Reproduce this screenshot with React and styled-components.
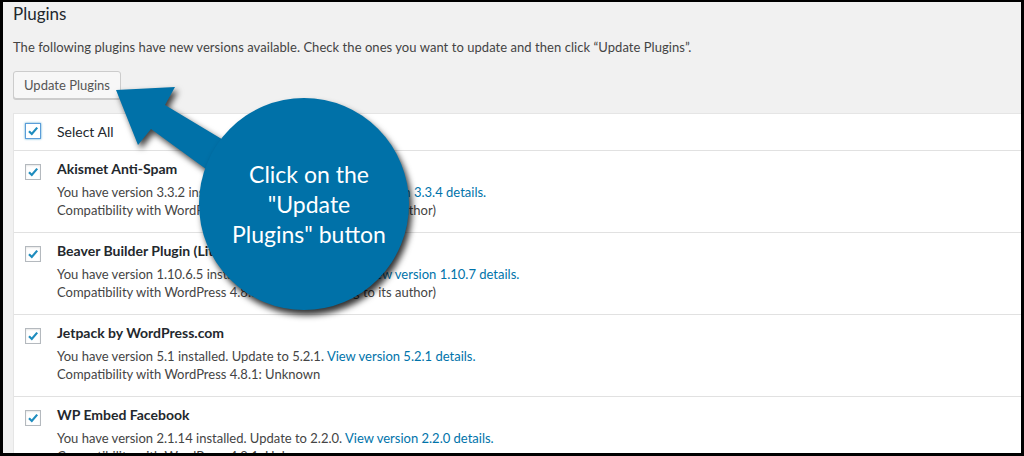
import React from 'react'
import styled, { createGlobalStyle } from 'styled-components'

const GlobalStyle = createGlobalStyle`
  body {
    margin: 0;
    background: #000;
  }
`

const FONT = `Lato, "Liberation Sans", sans-serif`

const Frame = styled.div`
  position: relative;
  box-sizing: border-box;
  width: 1024px;
  height: 456px;
  overflow: hidden;
  border: 3px solid #000;
  border-top-width: 2px;
  background: #f1f1f1;
  padding-left: 10px;
  font-family: ${FONT};
  color: #444;
`

const Heading = styled.h2`
  margin: 0;
  padding-top: 1px;
  font-size: 17px;
  line-height: 22px;
  font-weight: 400;
  color: #23282d;
`

const Intro = styled.p`
  margin: 13px 0 0;
  font-size: 13px;
  line-height: 18px;
  letter-spacing: 0.05px;
`

const Button = styled.button`
  margin-top: 15px;
  height: 28px;
  padding: 0 10px;
  font-family: ${FONT};
  font-size: 13px;
  color: #555;
  background: #f7f7f7;
  border: 1px solid #ccc;
  border-radius: 3px;
  box-shadow: 0 1px 0 #ccc;
`

const Table = styled.div`
  margin-top: 14px;
  background: #fff;
  border-left: 1px solid #e5e5e5;
  border-top: 1px solid #e5e5e5;
`

const Row = styled.div`
  display: flex;
  border-top: ${p => (p.first ? 'none' : '1px solid #e1e1e1')};
  padding: 8px 0 ${p => (p.first ? '8px' : '13px')};
`

const CheckCell = styled.div`
  width: 43px;
  flex: none;
  padding-left: 11px;
  box-sizing: border-box;
`

const Box = styled.span`
  display: block;
  box-sizing: border-box;
  width: 16px;
  height: 16px;
  margin-top: ${p => p.top}px;
  border: 1px solid ${p => (p.focus ? '#5b9dd9' : '#b4b9be')};
  box-shadow: ${p => (p.focus ? '0 0 2px rgba(30,140,190,.8)' : 'inset 0 1px 2px rgba(0,0,0,.1)')};
  background: #fff;

  svg {
    display: block;
  }
`

const Label = styled.div`
  font-size: 14px;
  line-height: 20px;
  color: #23282d;
`

const Info = styled.div`
  display: flex;
  flex-direction: column;
`

const Title = styled.div`
  font-size: 14px;
  line-height: 20px;
  font-weight: 700;
  color: #23282d;
`

const Desc = styled.div`
  margin-top: 4px;
  font-size: 13px;
  line-height: 18px;
  color: #444;
`

const Link = styled.a`
  color: #0073aa;
  text-decoration: none;
`

const ArrowSvg = styled.svg`
  position: absolute;
  left: 0;
  top: 0;
  overflow: visible;
  filter: drop-shadow(3px 4px 3px rgba(0, 0, 0, 0.75));
`

const Bubble = styled.div`
  position: absolute;
  left: 196px;
  top: 96px;
  width: 210px;
  height: 212px;
  border-radius: 50%;
  background: #0071a8;
  box-shadow: 3px 5px 6px rgba(0, 0, 0, 0.8);
  display: flex;
  align-items: center;
  justify-content: center;
  text-align: center;
  color: #fff;
  font-size: 23px;
  line-height: 30px;
  padding-left: 10px;
  box-sizing: border-box;
`

function Check({ top, focus }) {
  return (
    <Box top={top} focus={focus}>
      <svg width="14" height="14" viewBox="0 0 14 14">
        <path d="M3 7.2 L5.8 10 L11.2 3.6" fill="none" stroke="#1e8cbe" strokeWidth="2.2" />
      </svg>
    </Box>
  )
}

const plugins = [
  {
    name: 'Akismet Anti-Spam',
    from: '3.3.2',
    to: '3.3.4',
    compat: '100% (according to its author)',
  },
  {
    name: 'Beaver Builder Plugin (Lite Version)',
    from: '1.10.6.5',
    to: '1.10.7',
    compat: '100% (according to its author)',
  },
  {
    name: 'Jetpack by WordPress.com',
    from: '5.1',
    to: '5.2.1',
    compat: 'Unknown',
  },
  {
    name: 'WP Embed Facebook',
    from: '2.1.14',
    to: '2.2.0',
    compat: 'Unknown',
  },
]

export default function App() {
  return (
    <Frame>
      <GlobalStyle />
      <Heading>Plugins</Heading>
      <Intro>
        The following plugins have new versions available. Check the ones you want to update and then click “Update Plugins”.
      </Intro>
      <Button>Update Plugins</Button>
      <Table>
        <Row first>
          <CheckCell>
            <Check top={1} focus />
          </CheckCell>
          <Label>Select All</Label>
        </Row>
        {plugins.map(p => (
          <Row key={p.name}>
            <CheckCell>
              <Check top={5} />
            </CheckCell>
            <Info>
              <Title>{p.name}</Title>
              <Desc>
                You have version {p.from} installed. Update to {p.to}.{' '}
                <Link>View version {p.to} details.</Link>
                <br />
                Compatibility with WordPress 4.8.1: {p.compat}
              </Desc>
            </Info>
          </Row>
        ))}
      </Table>

      <ArrowSvg width="1024" height="456">
        <polygon
          points="113,88 172,85 162,103 232,145 218,178 148,127 135,143"
          fill="#0071a8"
        />
      </ArrowSvg>
      <Bubble>
        Click on the
        <br />
        "Update
        <br />
        Plugins" button
      </Bubble>
    </Frame>
  )
}
